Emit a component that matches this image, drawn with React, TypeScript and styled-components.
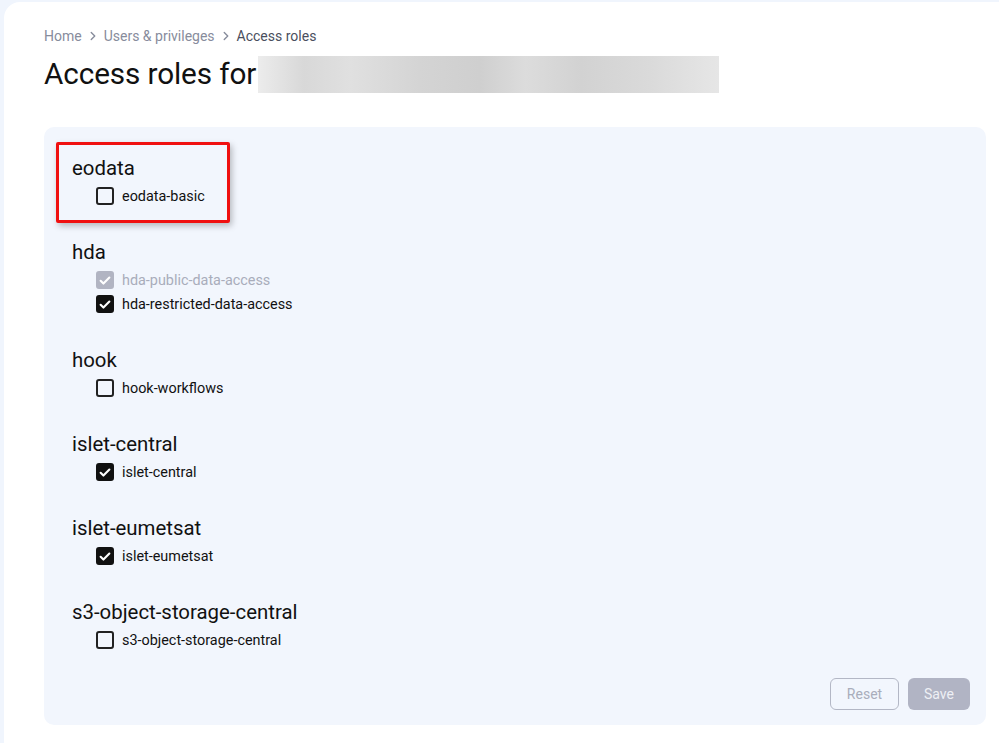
import { FC } from "react";
import styled, { createGlobalStyle } from "styled-components";

type Role = { name: string; checked: boolean; disabled?: boolean };
type Group = { title: string; roles: Role[]; highlight?: boolean };

const groups: Group[] = [
  { title: "eodata", highlight: true, roles: [{ name: "eodata-basic", checked: false }] },
  {
    title: "hda",
    roles: [
      { name: "hda-public-data-access", checked: true, disabled: true },
      { name: "hda-restricted-data-access", checked: true },
    ],
  },
  { title: "hook", roles: [{ name: "hook-workflows", checked: false }] },
  { title: "islet-central", roles: [{ name: "islet-central", checked: true }] },
  { title: "islet-eumetsat", roles: [{ name: "islet-eumetsat", checked: true }] },
  {
    title: "s3-object-storage-central",
    roles: [{ name: "s3-object-storage-central", checked: false }],
  },
];

const Chevron: FC = () => (
  <svg width="14" height="14" viewBox="0 0 24 24" fill="none" stroke="currentColor" strokeWidth="2.4" strokeLinecap="round" strokeLinejoin="round">
    <path d="M9 6l6 6-6 6" />
  </svg>
);

const Check: FC = () => (
  <svg width="15" height="15" viewBox="0 0 24 24" fill="none" stroke="#fff" strokeWidth="3.6" strokeLinecap="round" strokeLinejoin="round">
    <path d="M4.5 12.5l4.8 4.8L19.5 7" />
  </svg>
);

const App: FC = () => {
  return (
    <>
      <GlobalStyle />
      <Page>
        <Card>
          <Breadcrumbs>
            <Crumb>Home</Crumb>
            <Chevron />
            <Crumb>Users &amp; privileges</Crumb>
            <Chevron />
            <Crumb current>Access roles</Crumb>
          </Breadcrumbs>
          <Title>
            Access roles for
            <Redacted aria-hidden />
          </Title>
          <Panel>
            {groups.map((group) => (
              <GroupBlock key={group.title}>
                {group.highlight && <Highlight />}
                <GroupTitle>{group.title}</GroupTitle>
                {group.roles.map((role) => (
                  <RoleRow key={role.name} disabled={role.disabled}>
                    <Box checked={role.checked} disabled={role.disabled}>
                      {role.checked && <Check />}
                    </Box>
                    {role.name}
                  </RoleRow>
                ))}
              </GroupBlock>
            ))}
            <Actions>
              <ResetButton>Reset</ResetButton>
              <SaveButton>Save</SaveButton>
            </Actions>
          </Panel>
        </Card>
      </Page>
    </>
  );
};

export default App;

const GlobalStyle = createGlobalStyle`
  html, body {
    margin: 0;
    padding: 0;
    background: #f0f5fd;
    font-family: Roboto, "Liberation Sans", Arial, sans-serif;
    color: #111;
  }
`;

const Page = styled.div`
  width: 999px;
  height: 743px;
  overflow: hidden;
  padding: 2px 0 0 4px;
  box-sizing: border-box;
`;

const Card = styled.div`
  background: #fff;
  border-top-left-radius: 16px;
  padding: 26px 13px 0 40px;
  min-height: 760px;
  box-sizing: border-box;
`;

const Breadcrumbs = styled.nav`
  display: flex;
  align-items: center;
  gap: 4px;
  height: 16px;
  font-size: 14px;
  color: #878c9c;
`;

const Crumb = styled.span<{ current?: boolean }>`
  color: ${({ current }) => (current ? "#4a4f5e" : "#878c9c")};
`;

const Title = styled.h1`
  display: flex;
  align-items: center;
  margin: 11px 0 0;
  font-size: 29.7px;
  font-weight: 400;
  line-height: 38px;
  letter-spacing: -0.1px;
  color: #111;
`;

const Redacted = styled.span`
  display: inline-block;
  width: 461px;
  height: 37px;
  margin-left: 2px;
  background: linear-gradient(
    90deg,
    #ececec 0%,
    #d8d8d8 10%,
    #e0e0e0 20%,
    #d4d4d4 35%,
    #cfcfcf 48%,
    #dcdcdc 58%,
    #d2d2d2 70%,
    #dadada 85%,
    #e6e6e6 100%
  );
`;

const Panel = styled.section`
  position: relative;
  margin-top: 34px;
  width: 942px;
  height: 598px;
  box-sizing: border-box;
  padding: 26px 28px 0;
  background: #f2f6fd;
  border-radius: 10px;
`;

const GroupBlock = styled.div`
  position: relative;
  margin-bottom: 29px;
`;

const Highlight = styled.div`
  position: absolute;
  left: -16px;
  top: -11px;
  width: 174px;
  height: 81px;
  box-sizing: border-box;
  border: 3px solid #f01010;
  border-radius: 2px;
  box-shadow: 2px 3px 6px rgba(0, 0, 0, 0.25);
  pointer-events: none;
`;

const GroupTitle = styled.div`
  font-size: 20.4px;
  line-height: 31px;
  color: #111;
`;

const RoleRow = styled.label<{ disabled?: boolean }>`
  display: flex;
  align-items: center;
  gap: 8px;
  height: 24px;
  padding-left: 24px;
  font-size: 14.4px;
  color: ${({ disabled }) => (disabled ? "#a9adbb" : "#111")};
`;

const Box = styled.span<{ checked: boolean; disabled?: boolean }>`
  display: inline-flex;
  align-items: center;
  justify-content: center;
  width: 18px;
  height: 18px;
  box-sizing: border-box;
  border-radius: 3px;
  border: 2px solid ${({ checked, disabled }) => (disabled ? "#b1b4c2" : checked ? "#111" : "#222")};
  background: ${({ checked, disabled }) => (disabled ? "#b1b4c2" : checked ? "#111" : "transparent")};
`;

const Actions = styled.div`
  position: absolute;
  right: 16px;
  bottom: 15px;
  display: flex;
  gap: 9px;
`;

const ResetButton = styled.button`
  height: 32px;
  width: 69px;
  border: 1px solid #b3b7c5;
  border-radius: 6px;
  background: transparent;
  color: #a9adbb;
  font: 14px Roboto, "Liberation Sans", sans-serif;
`;

const SaveButton = styled.button`
  height: 32px;
  width: 62px;
  border: none;
  border-radius: 6px;
  background: #b1b4c4;
  color: #eef0f5;
  font: 14px Roboto, "Liberation Sans", sans-serif;
`;
